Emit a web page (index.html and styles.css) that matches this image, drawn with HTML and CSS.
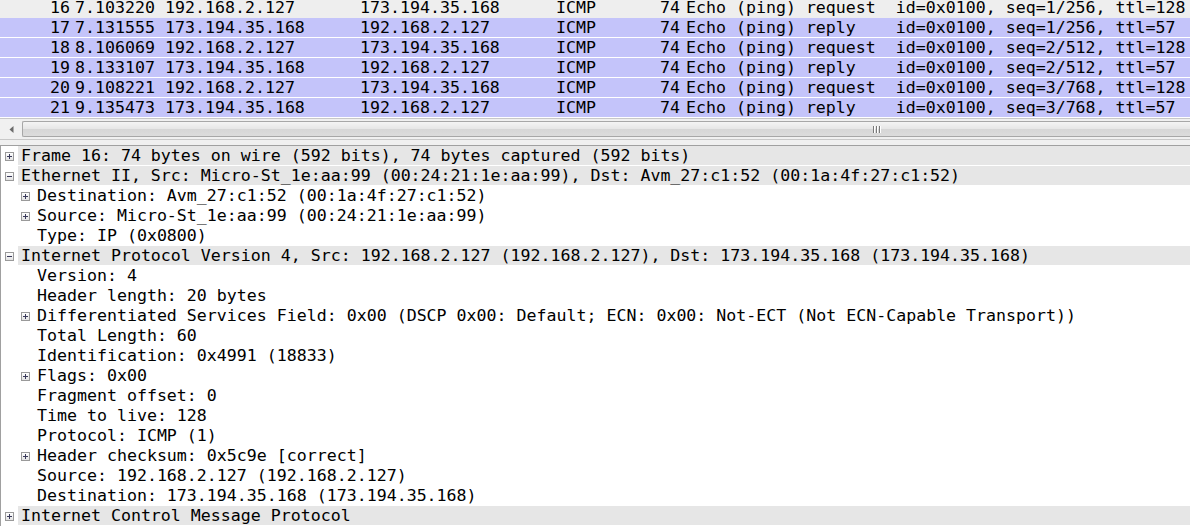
FILE: index.html
```html
<!DOCTYPE html>
<html>
<head>
<meta charset="utf-8">
<link rel="stylesheet" href="styles.css">
</head>
<body>
<div class="app">
  <div class="packet-list">
    <div class="rows">
      <div class="pkt pkt-first"><span class="c-no">16</span><span class="c-time">7.103220</span><span class="c-src">192.168.2.127</span><span class="c-dst">173.194.35.168</span><span class="c-proto">ICMP</span><span class="c-len">74</span><span class="c-info">Echo (ping) request  id=0x0100, seq=1/256, ttl=128</span></div>
      <div class="pkt"><span class="c-no">17</span><span class="c-time">7.131555</span><span class="c-src">173.194.35.168</span><span class="c-dst">192.168.2.127</span><span class="c-proto">ICMP</span><span class="c-len">74</span><span class="c-info">Echo (ping) reply    id=0x0100, seq=1/256, ttl=57</span></div>
      <div class="pkt"><span class="c-no">18</span><span class="c-time">8.106069</span><span class="c-src">192.168.2.127</span><span class="c-dst">173.194.35.168</span><span class="c-proto">ICMP</span><span class="c-len">74</span><span class="c-info">Echo (ping) request  id=0x0100, seq=2/512, ttl=128</span></div>
      <div class="pkt"><span class="c-no">19</span><span class="c-time">8.133107</span><span class="c-src">173.194.35.168</span><span class="c-dst">192.168.2.127</span><span class="c-proto">ICMP</span><span class="c-len">74</span><span class="c-info">Echo (ping) reply    id=0x0100, seq=2/512, ttl=57</span></div>
      <div class="pkt"><span class="c-no">20</span><span class="c-time">9.108221</span><span class="c-src">192.168.2.127</span><span class="c-dst">173.194.35.168</span><span class="c-proto">ICMP</span><span class="c-len">74</span><span class="c-info">Echo (ping) request  id=0x0100, seq=3/768, ttl=128</span></div>
      <div class="pkt"><span class="c-no">21</span><span class="c-time">9.135473</span><span class="c-src">173.194.35.168</span><span class="c-dst">192.168.2.127</span><span class="c-proto">ICMP</span><span class="c-len">74</span><span class="c-info">Echo (ping) reply    id=0x0100, seq=3/768, ttl=57</span></div>
    </div>
  </div>
  <div class="hscroll">
    <div class="arrow-btn"><svg width="5" height="7" viewBox="0 0 5 7"><path d="M4.5 0 L0.5 3.5 L4.5 7 Z" fill="#6b6b6b"/></svg></div>
    <div class="thumb"><span class="grip"><i></i><i></i><i></i></span></div>
  </div>
  <div class="splitter"></div>
  <div class="details">
    <div class="node top"><span class="tg"><span class="box plus"></span></span><span class="lbl">Frame 16: 74 bytes on wire (592 bits), 74 bytes captured (592 bits)</span></div>
    <div class="node top"><span class="tg"><span class="box minus"></span></span><span class="lbl">Ethernet II, Src: Micro-St_1e:aa:99 (00:24:21:1e:aa:99), Dst: Avm_27:c1:52 (00:1a:4f:27:c1:52)</span></div>
    <div class="node sub"><span class="tg"><span class="box plus"></span></span><span class="lbl">Destination: Avm_27:c1:52 (00:1a:4f:27:c1:52)</span></div>
    <div class="node sub"><span class="tg"><span class="box plus"></span></span><span class="lbl">Source: Micro-St_1e:aa:99 (00:24:21:1e:aa:99)</span></div>
    <div class="node sub"><span class="tg"></span><span class="lbl">Type: IP (0x0800)</span></div>
    <div class="node top"><span class="tg"><span class="box minus"></span></span><span class="lbl">Internet Protocol Version 4, Src: 192.168.2.127 (192.168.2.127), Dst: 173.194.35.168 (173.194.35.168)</span></div>
    <div class="node sub"><span class="tg"></span><span class="lbl">Version: 4</span></div>
    <div class="node sub"><span class="tg"></span><span class="lbl">Header length: 20 bytes</span></div>
    <div class="node sub"><span class="tg"><span class="box plus"></span></span><span class="lbl">Differentiated Services Field: 0x00 (DSCP 0x00: Default; ECN: 0x00: Not-ECT (Not ECN-Capable Transport))</span></div>
    <div class="node sub"><span class="tg"></span><span class="lbl">Total Length: 60</span></div>
    <div class="node sub"><span class="tg"></span><span class="lbl">Identification: 0x4991 (18833)</span></div>
    <div class="node sub"><span class="tg"><span class="box plus"></span></span><span class="lbl">Flags: 0x00</span></div>
    <div class="node sub"><span class="tg"></span><span class="lbl">Fragment offset: 0</span></div>
    <div class="node sub"><span class="tg"></span><span class="lbl">Time to live: 128</span></div>
    <div class="node sub"><span class="tg"></span><span class="lbl">Protocol: ICMP (1)</span></div>
    <div class="node sub"><span class="tg"><span class="box plus"></span></span><span class="lbl">Header checksum: 0x5c9e [correct]</span></div>
    <div class="node sub"><span class="tg"></span><span class="lbl">Source: 192.168.2.127 (192.168.2.127)</span></div>
    <div class="node sub"><span class="tg"></span><span class="lbl">Destination: 173.194.35.168 (173.194.35.168)</span></div>
    <div class="node top"><span class="tg"><span class="box plus"></span></span><span class="lbl">Internet Control Message Protocol</span></div>
  </div>
</div>
</body>
</html>
```

FILE: styles.css
```css
html, body {
  margin: 0;
  padding: 0;
  background: #ffffff;
}

body {
  width: 1190px;
  height: 531px;
  overflow: hidden;
  font-family: "DejaVu Sans Mono", "Liberation Mono", monospace;
  font-size: 16.6px;
  color: #000000;
}

.app {
  display: flex;
  flex-direction: column;
}

.packet-list {
  height: 118px;
  overflow: hidden;
  background: #ffffff;
}

.pkt {
  display: grid;
  grid-template-columns: 72px 93px 195px 196px 83px 41px 1fr;
  column-gap: 0;
  height: 19px;
  line-height: 19px;
  background: #c4c4fa;
  border-bottom: 1px solid #ffffff;
  white-space: pre;
}

.pkt-first {
  background: #eeeeee;
  border-bottom: none;
  height: 18px;
  line-height: 16px;
}

.c-no {
  text-align: right;
  padding-right: 2px;
}

.c-time {
  padding-left: 3px;
}

.c-len {
  text-align: right;
}

.c-info {
  padding-left: 6px;
}

.hscroll {
  height: 20px;
  display: flex;
  align-items: stretch;
  background: #f0f0f0;
  border-top: 1px solid #c8c8c8;
  border-bottom: 1px solid #c8c8c8;
}

.arrow-btn {
  width: 22px;
  display: flex;
  align-items: center;
  justify-content: center;
}

.thumb {
  flex: 1;
  margin: 2px 0 2px 0;
  border: 1px solid #a7a7a7;
  border-right: none;
  border-radius: 2px 0 0 2px;
  background: linear-gradient(#f4f4f4, #e6e6e6 50%, #d6d6d6 51%, #dcdcdc);
  display: flex;
  align-items: center;
}

.grip {
  margin-left: 850px;
  display: flex;
  gap: 2px;
}

.grip i {
  display: block;
  width: 1px;
  height: 7px;
  background: #7a7a7a;
  box-shadow: 1px 0 0 #ffffff;
}

.splitter {
  height: 5px;
  background: #f0f0f0;
  border-bottom: 1px solid #a0a0a0;
}

.details {
  border-left: 1px solid #a0a0a0;
  background: #ffffff;
}

.node {
  display: flex;
  height: 20px;
  line-height: 20px;
  white-space: pre;
}

.node.sub {
  padding-left: 16px;
}

.tg {
  width: 17px;
  flex: none;
  display: flex;
  align-items: center;
  padding-left: 4px;
  box-sizing: border-box;
}

.lbl {
  flex: 1;
  padding-left: 3px;
}

.node.top .lbl {
  background: #e6e6e6;
  height: 19px;
  line-height: 20px;
  border-bottom: 1px solid #ffffff;
}

.box {
  position: relative;
  display: block;
  width: 7px;
  height: 7px;
  border: 1px solid #9a9a9a;
  background: linear-gradient(#ffffff, #e2e2e2);
}

.box::before {
  content: "";
  position: absolute;
  left: 1px;
  top: 3px;
  width: 5px;
  height: 1px;
  background: #3a3a5a;
}

.box.plus::after {
  content: "";
  position: absolute;
  left: 3px;
  top: 1px;
  width: 1px;
  height: 5px;
  background: #3a3a5a;
}
```
